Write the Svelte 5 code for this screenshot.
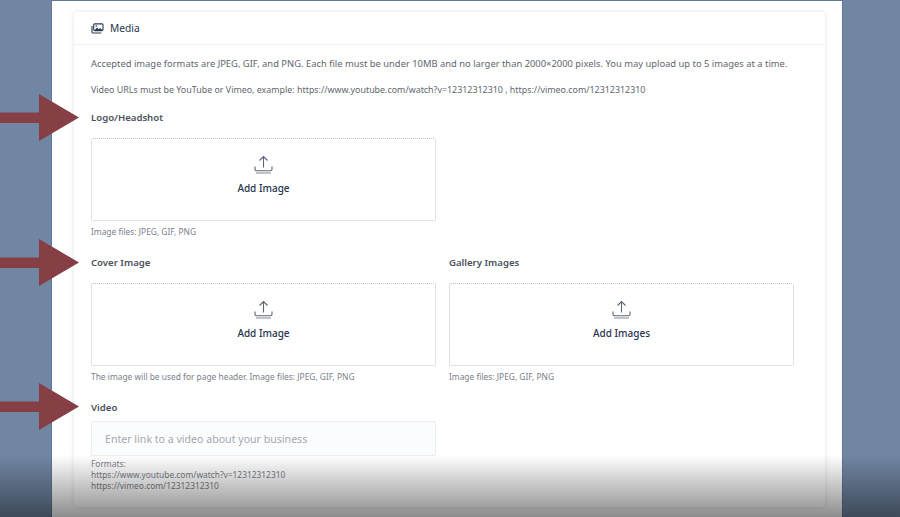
<script>
  const arrowTops = [94, 239, 383];
  const urls = "https://www.youtube.com/watch?v=12312312310 , https://vimeo.com/12312312310";
</script>

{#snippet uploadIcon()}
  <svg class="upload" width="19" height="19" viewBox="0 0 19 19" fill="none" stroke="#5c6573" stroke-width="1.1">
    <path d="M9.500 12.500V1.500M5.500 5.500l4-4 4 4" />
    <path d="M1 11.500v2.800c0 .9.7 1.500 1.500 1.500h14c.8 0 1.500-.6 1.500-1.500v-2.800" />
    <path d="M2 18h15" stroke="#8f96a1" />
  </svg>
{/snippet}

{#snippet dropzone(label)}
  <div class="dropzone">
    {@render uploadIcon()}
    <span>{label}</span>
  </div>
{/snippet}

<div class="page">
  <div class="panel">
    <div class="card">
      <div class="card-header">
        <svg width="13" height="11" viewBox="0 0 15 13" fill="none" stroke="#2c3850" stroke-width="1.3">
          <rect x="3" y="1" width="11" height="8" rx="1.2" />
          <path d="M1 3.500v7c0 .8.5 1.300 1.300 1.300H12" />
          <path d="M4 8.600l3-3.200 2 2 1.600-1.600 2.800 2.800z" fill="#2c3850" stroke="none" />
          <circle cx="6" cy="3.600" r=".9" fill="#2c3850" stroke="none" />
        </svg>
        <span>Media</span>
      </div>
      <div class="card-body">
        <p>Accepted image formats are JPEG, GIF, and PNG. Each file must be under 10MB and no larger than 2000×2000 pixels. You may upload up to 5 images at a time.</p>
        <p class="video-note">Video URLs must be YouTube or Vimeo, example: {urls}</p>

        <div class="grid">
          <section>
            <h3>Logo/Headshot</h3>
            {@render dropzone("Add Image")}
            <small>Image files: JPEG, GIF, PNG</small>
          </section>
          <div></div>
          <section>
            <h3>Cover Image</h3>
            {@render dropzone("Add Image")}
            <small>The image will be used for page header. Image files: JPEG, GIF, PNG</small>
          </section>
          <section>
            <h3>Gallery Images</h3>
            {@render dropzone("Add Images")}
            <small>Image files: JPEG, GIF, PNG</small>
          </section>
          <section class="video">
            <h3>Video</h3>
            <input type="text" placeholder="Enter link to a video about your business" />
            <small class="formats">Formats:<br />https://www.youtube.com/watch?v=12312312310<br />https://vimeo.com/12312312310</small>
          </section>
        </div>
      </div>
    </div>
  </div>

  {#each arrowTops as top}
    <svg class="arrow" style="top: {top}px" width="80" height="48" viewBox="0 0 80 48">
      <path d="M0 18.500H39V0L79 23.500 39 47V29H0z" fill="#873f46" />
    </svg>
  {/each}

  <div class="fade"></div>
</div>

<style>
  :global(body) {
    margin: 0;
    background: #7186a3;
  }

  .page {
    position: relative;
    height: 517px;
    overflow: hidden;
    background: #7186a3;
    font-family: "Noto Sans", "Open Sans", sans-serif;
  }

  .panel {
    width: 790px;
    height: 516px;
    margin: 1px 0 0 52px;
    padding: 11px 17px 0 22px;
    box-sizing: border-box;
    background: #fff;
    box-shadow: 0 0 0 1px #6076a0;
  }

  .card {
    height: 495px;
    border-radius: 3px;
    background: #fff;
    box-shadow: 0 0 5px rgba(30, 40, 60, 0.13);
  }

  .card-header {
    display: flex;
    align-items: center;
    gap: 6px;
    height: 32px;
    padding-left: 17px;
    border-bottom: 1px solid #eeeeef;
    color: #27334d;
    font-size: 10.200px;
  }

  .card-body {
    padding: 12px 17px 0;
    color: #5f6670;
  }

  p {
    margin: 0 0 12px;
    font-size: 9.400px;
    line-height: 14px;
  }

  .video-note {
    margin-bottom: 13px;
    font-size: 8.900px;
  }

  .grid {
    display: grid;
    grid-template-columns: 345px 345px;
    column-gap: 13px;
  }

  h3 {
    margin: 0 0 13px;
    font-size: 9.600px;
    line-height: 15px;
    font-weight: 600;
    color: #4a515b;
  }

  .dropzone {
    display: flex;
    flex-direction: column;
    align-items: center;
    box-sizing: border-box;
    height: 83px;
    padding-top: 16px;
    gap: 7px;
    border: 1px dotted #bfc4ca;
    border-radius: 2px;
    color: #27334d;
    font-size: 10px;
    font-weight: 500;
  }

  small {
    display: block;
    margin: 5px 0 17px;
    font-size: 8.400px;
    line-height: 12px;
    color: #7a8089;
  }

  .video h3 {
    margin-bottom: 6px;
  }

  input {
    display: block;
    width: 100%;
    height: 35px;
    box-sizing: border-box;
    padding: 0 13px;
    border: 1px solid #e8eef4;
    border-radius: 2px;
    background: #fbfcfe;
    font-family: inherit;
    font-size: 10.600px;
  }

  input::placeholder {
    color: #a3a8af;
    opacity: 1;
  }

  .formats {
    margin: 2px 0 0;
    line-height: 11px;
  }

  .arrow {
    position: absolute;
    left: 0;
  }

  .fade {
    position: absolute;
    left: 0;
    right: 0;
    bottom: 0;
    height: 62px;
    background: linear-gradient(rgba(0, 0, 0, 0), rgba(0, 0, 0, 0.45));
    pointer-events: none;
  }
</style>
